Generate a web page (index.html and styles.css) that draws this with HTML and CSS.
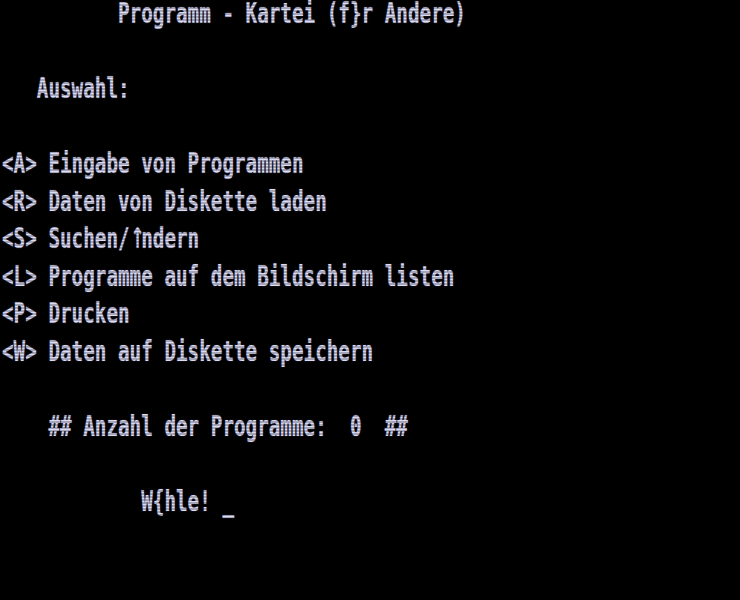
FILE: index.html
```html
<!DOCTYPE html>
<html>
<head>
<meta charset="utf-8">
<link rel="stylesheet" href="styles.css">
</head>
<body>
<div class="screen">
  <div class="row"><div class="txt">          Programm - Kartei (f}r Andere)</div></div>
  <div class="row"><div class="txt"> </div></div>
  <div class="row"><div class="txt">   Auswahl:</div></div>
  <div class="row"><div class="txt"> </div></div>
  <div class="row"><div class="txt">&lt;A&gt; Eingabe von Programmen</div></div>
  <div class="row"><div class="txt">&lt;R&gt; Daten von Diskette laden</div></div>
  <div class="row"><div class="txt">&lt;S&gt; Suchen/<span class="arw">↑</span>ndern</div></div>
  <div class="row"><div class="txt">&lt;L&gt; Programme auf dem Bildschirm listen</div></div>
  <div class="row"><div class="txt">&lt;P&gt; Drucken</div></div>
  <div class="row"><div class="txt">&lt;W&gt; Daten auf Diskette speichern</div></div>
  <div class="row"><div class="txt"> </div></div>
  <div class="row"><div class="txt">    ## Anzahl der Programme:  0  ##</div></div>
  <div class="row"><div class="txt"> </div></div>
  <div class="row"><div class="txt">            W{hle! _</div></div>
  <div class="row"><div class="txt"> </div></div>
  <div class="row"><div class="txt"> </div></div>
  <div class="scanlines"></div>
</div>
</body>
</html>
```
FILE: styles.css
```css
html, body {
  margin: 0;
  padding: 0;
  background: #000;
}
.screen {
  position: relative;
  width: 740px;
  height: 600px;
  overflow: hidden;
  background: #000;
}
.row {
  height: 37.5px;
  padding-left: 2px;
  display: flow-root;
}
.txt {
  font-family: "DejaVu Sans Mono", monospace;
  font-weight: bold;
  font-size: 19.27px;
  line-height: 19.27px;
  white-space: pre;
  color: #dcdcf6;
  transform: translateY(-1px) scaleY(1.5);
  transform-origin: 0 0;
  text-shadow: 0 0 1px rgba(200, 200, 255, 0.5);
}
.arw {
  display: inline-block;
  width: 11.6px;
  font-family: "DejaVu Sans", sans-serif;
  font-size: 19px;
  line-height: 19.27px;
  vertical-align: top;
  text-align: center;
  transform: scaleX(0.9);
}
.scanlines {
  position: absolute;
  inset: 0;
  background: repeating-linear-gradient(to bottom, rgba(0,0,0,0) 0, rgba(0,0,0,0) 1.5px, rgba(0,0,0,0.25) 1.5px, rgba(0,0,0,0.25) 3px);
  pointer-events: none;
}
```
